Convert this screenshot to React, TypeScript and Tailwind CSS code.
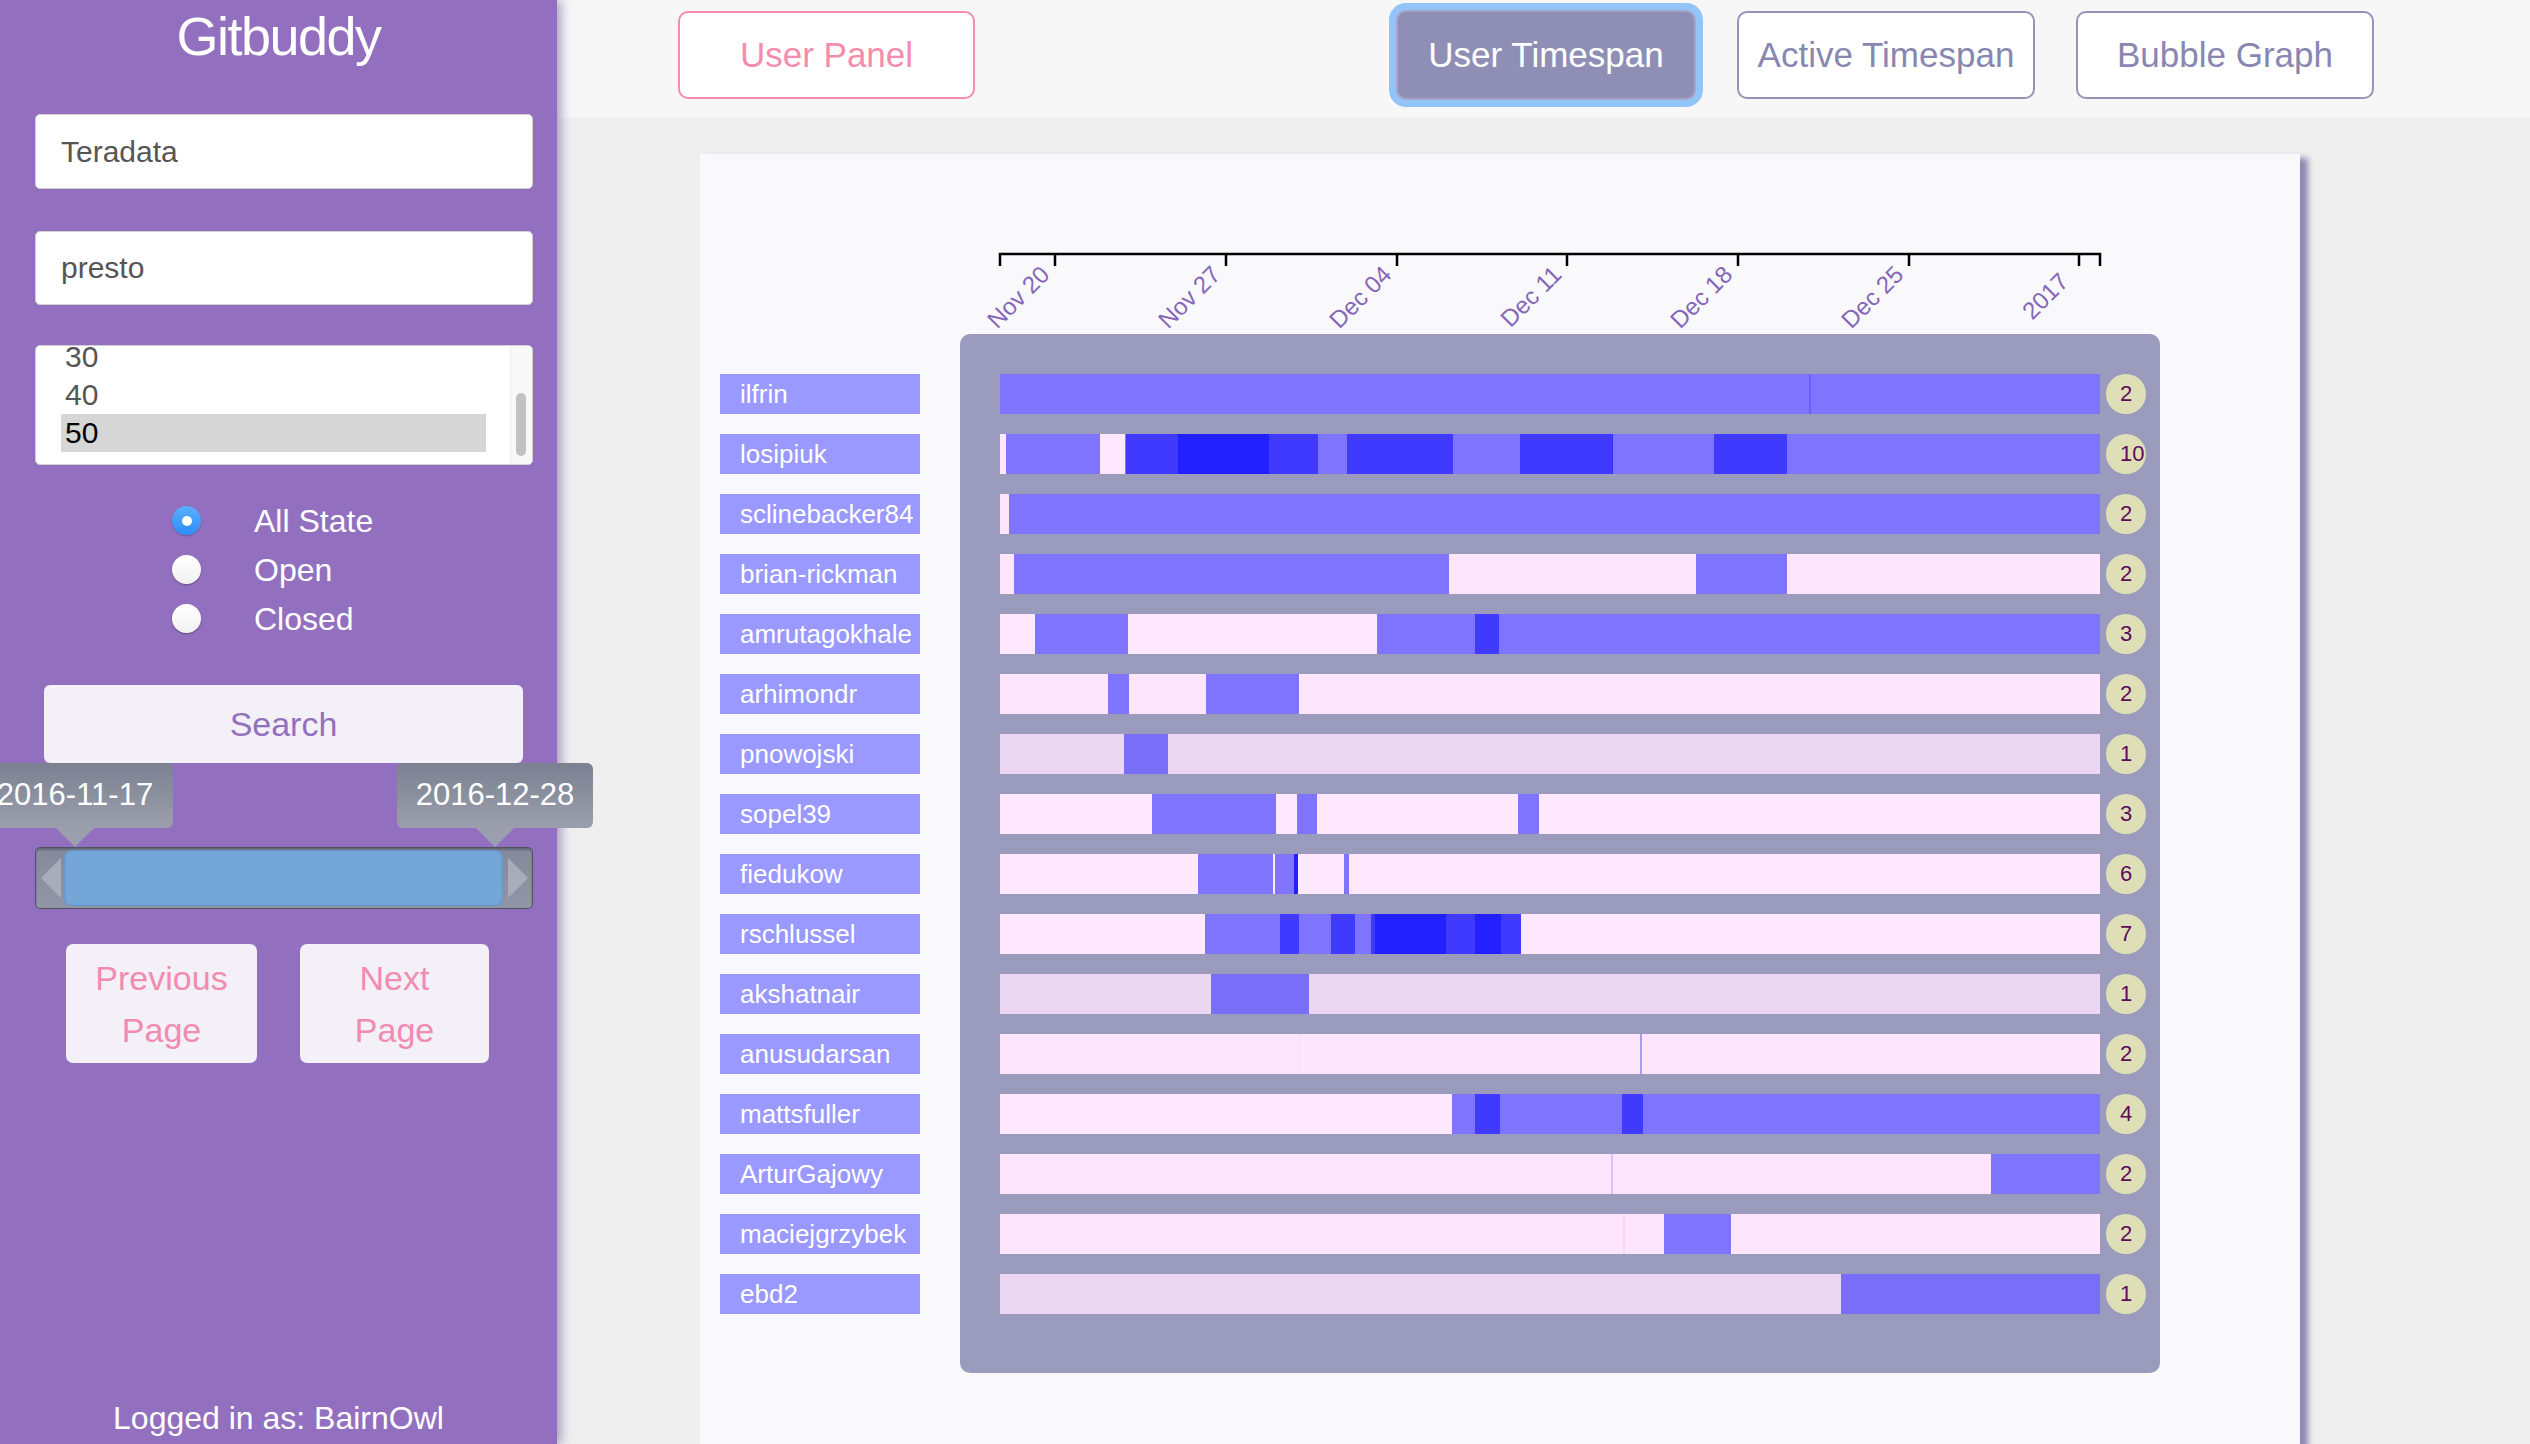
import React from "react";

type Seg = [number, number, string];

type Row = {
  name: string;
  count: number;
  base: string;
  segs: Seg[];
};

// bar colours
const L = "#7f74fe";
const M = "#4039ff";
const D = "#2220ff";
const PINK = "#fde6fb";
const LAV = "#ebd7f2";
const L2 = "#786ef7";

// segment offsets are px inside the 1100px bar
const rows: Row[] = [
  { name: "ilfrin", count: 2, base: L, segs: [[809, 810.5, "#6a5eff"]] },
  {
    name: "losipiuk",
    count: 10,
    base: L,
    segs: [
      [0, 6.4, "#ffe8fe"],
      [99.8, 124.6, "#ffe8fe"],
      [126, 177.7, M],
      [177.7, 269, D],
      [269, 318, M],
      [347, 453, M],
      [520.3, 612.3, M],
      [611.5, 612.5, "#3030ff"],
      [714.3, 787.2, M],
    ],
  },
  { name: "sclinebacker84", count: 2, base: L, segs: [[0, 9.2, PINK]] },
  {
    name: "brian-rickman",
    count: 2,
    base: PINK,
    segs: [
      [14.2, 449.5, L],
      [695.9, 787.2, L],
    ],
  },
  {
    name: "amrutagokhale",
    count: 3,
    base: "#fee8fd",
    segs: [
      [35.4, 128.1, L],
      [377.3, 1100, L],
      [475, 499.1, M],
    ],
  },
  {
    name: "arhimondr",
    count: 2,
    base: PINK,
    segs: [
      [108.3, 129.5, L],
      [206, 298.7, L],
    ],
  },
  { name: "pnowojski", count: 1, base: LAV, segs: [[123.9, 167.8, L2]] },
  {
    name: "sopel39",
    count: 3,
    base: "#fee8fd",
    segs: [
      [152.2, 276.1, L],
      [297.3, 317.1, L],
      [518.2, 539.4, L],
    ],
  },
  {
    name: "fiedukow",
    count: 6,
    base: "#fee8fd",
    segs: [
      [198.2, 273.3, L],
      [275.4, 293.8, L],
      [293.8, 298, D],
      [344, 349, L],
    ],
  },
  {
    name: "rschlussel",
    count: 7,
    base: "#fee8fd",
    segs: [
      [205.3, 279.6, L],
      [279.6, 299.4, M],
      [299.4, 330.6, L],
      [330.6, 354.7, M],
      [354.7, 371, L],
      [371, 375.2, M],
      [375.2, 446, D],
      [446, 475, M],
      [475, 500.5, D],
      [500.5, 521, M],
    ],
  },
  { name: "akshatnair", count: 1, base: LAV, segs: [[211, 309.4, L2]] },
  {
    name: "anusudarsan",
    count: 2,
    base: PINK,
    segs: [
      [299, 300, "#f6def8"],
      [639.5, 641.5, "#a89cff"],
    ],
  },
  {
    name: "mattsfuller",
    count: 4,
    base: "#fee8fd",
    segs: [
      [451.6, 1100, L],
      [475, 499.8, M],
      [621.5, 642.8, M],
    ],
  },
  {
    name: "ArturGajowy",
    count: 2,
    base: PINK,
    segs: [
      [611, 612.5, "#dcc0f8"],
      [991.1, 1100, L],
    ],
  },
  {
    name: "maciejgrzybek",
    count: 2,
    base: PINK,
    segs: [
      [623, 624.5, "#f3d6f8"],
      [664, 731.3, L],
    ],
  },
  { name: "ebd2", count: 1, base: LAV, segs: [[841, 1100, L2]] },
];

const ticks = [
  { x: 355, label: "Nov 20", dx: -4, dy: 22 },
  { x: 526, label: "Nov 27", dx: -4, dy: 22 },
  { x: 697, label: "Dec 04", dx: -4, dy: 22 },
  { x: 867, label: "Dec 11", dx: -4, dy: 22 },
  { x: 1038, label: "Dec 18", dx: -4, dy: 22 },
  { x: 1209, label: "Dec 25", dx: -4, dy: 22 },
  { x: 1379, label: "2017", dx: -9, dy: 29 },
];

function Radio({ checked, label }: { checked?: boolean; label: string }) {
  return (
    <div className="flex h-[49px] items-center pl-[172px]">
      {checked ? (
        <div className="flex h-[29px] w-[29px] items-center justify-center rounded-full bg-gradient-to-b from-[#5aaefd] to-[#2f8df8] shadow-[0_1px_2px_rgba(0,0,0,0.25)]">
          <div className="h-[10px] w-[10px] rounded-full bg-white" />
        </div>
      ) : (
        <div className="h-[29px] w-[29px] rounded-full bg-gradient-to-b from-white to-[#f1f1f1] shadow-[0_1px_2px_rgba(0,0,0,0.35)]" />
      )}
      <span className="ml-[53px] text-[32px] leading-none text-white">{label}</span>
    </div>
  );
}

function Tooltip({ text, left }: { text: string; left: string }) {
  return (
    <div className={`absolute top-[-85px] ${left} flex w-[196px] flex-col items-center`}>
      <div className="flex h-[65px] w-full items-center justify-center rounded-[6px] bg-gradient-to-b from-[#7b8191] to-[#9b9fad] text-[31px] text-white">
        {text}
      </div>
      <svg width="38" height="19" viewBox="0 0 38 19" className="block">
        <polygon points="0,0 38,0 19,19" fill="#9b9fad" />
      </svg>
    </div>
  );
}

function TopButton({ label, kind }: { label: string; kind: "pink" | "active" | "plain" }) {
  if (kind === "active") {
    return (
      <button className="h-[90px] w-[300px] rounded-[10px] border-2 border-[#a5a5cc] bg-[#8f8fb6] text-[35px] text-white shadow-[0_0_0_7px_#93c4f8]">
        {label}
      </button>
    );
  }
  if (kind === "pink") {
    return (
      <button className="h-[88px] w-[297px] rounded-[10px] border-2 border-[#f58cab] bg-white text-[35px] text-[#f68cad]">
        {label}
      </button>
    );
  }
  return (
    <button className="h-[88px] w-[298px] rounded-[10px] border-2 border-[#9494b9] bg-white text-[35px] text-[#8787b1]">
      {label}
    </button>
  );
}

export default function App() {
  return (
    <div className="flex h-[1444px] w-[2530px] overflow-hidden font-['Liberation_Sans',Arial,sans-serif]">
      {/* Sidebar */}
      <aside className="relative z-10 flex h-full w-[557px] shrink-0 flex-col bg-[#9370bf] shadow-[4px_0_10px_rgba(110,80,160,0.55)]">
        <h1 className="pt-[9px] text-center text-[54px] leading-[54px] tracking-[-1.5px] text-white">Gitbuddy</h1>

        <input
          readOnly
          defaultValue="Teradata"
          className="mx-[35px] mt-[51px] h-[75px] w-[498px] rounded-[5px] border border-[#cfcfcf] bg-white px-[25px] text-[30px] text-[#555555] outline-none"
        />
        <input
          readOnly
          defaultValue="presto"
          className="mx-[35px] mt-[42px] h-[74px] w-[498px] rounded-[5px] border border-[#cfcfcf] bg-white px-[25px] text-[30px] text-[#555555] outline-none"
        />

        {/* per-page list, scrolled to the bottom */}
        <div className="relative mx-[35px] mt-[40px] flex h-[120px] w-[498px] overflow-hidden rounded-[5px] border border-[#cfcfcf] bg-white">
          <div className="flex-1 overflow-hidden pl-[25px] pr-[24px]">
            <div className="mt-[-8px] flex flex-col">
              {["30", "40", "50"].map((n) => (
                <div
                  key={n}
                  className={`h-[38px] pl-[4px] text-[30px] leading-[38px] ${n === "50" ? "bg-[#d6d6d6] text-black" : "text-[#555555]"}`}
                >
                  {n}
                </div>
              ))}
            </div>
          </div>
          <div className="w-[22px] border-l border-[#ececec] bg-[#f8f8f8] pt-[47px]">
            <div className="ml-[5px] h-[63px] w-[10px] rounded-full bg-[#c2c2c2]" />
          </div>
        </div>

        {/* state */}
        <div className="mt-[31px] flex flex-col">
          <Radio checked label="All State" />
          <Radio label="Open" />
          <Radio label="Closed" />
        </div>

        <button className="mx-[44px] mt-[42px] h-[78px] w-[479px] rounded-[6px] bg-[#f3f0f8] text-[34px] text-[#9370bf]">
          Search
        </button>

        {/* date range slider */}
        <div className="relative mx-[35px] mt-[84px] h-[62px] w-[498px] rounded-[5px] border border-[#4f5360] bg-gradient-to-b from-[#858a9b] to-[#9195a5] shadow-[inset_0_2px_2px_rgba(0,0,0,0.25)]">
          <div className="absolute top-[2px] bottom-[2px] left-[28px] right-[29px] rounded-[7px] bg-[#75a6d8] shadow-[inset_0_0_3px_rgba(40,80,140,0.4)]" />
          <svg width="20" height="40" viewBox="0 0 20 40" className="absolute top-[10px] left-[5px]">
            <polygon points="20,0 20,40 0,20" fill="#a9adbb" />
          </svg>
          <svg width="20" height="40" viewBox="0 0 20 40" className="absolute top-[10px] right-[4px]">
            <polygon points="0,0 0,40 20,20" fill="#a9adbb" />
          </svg>
          <Tooltip text="2016-11-17" left="left-[-59px]" />
          <Tooltip text="2016-12-28" left="left-[361px]" />
        </div>

        <div className="mt-[35px] flex">
          <button className="ml-[66px] h-[119px] w-[191px] rounded-[7px] bg-[#f3f0f8] text-[34px] leading-[52px] text-[#f28bb0]">
            Previous
            <br />
            Page
          </button>
          <button className="ml-[43px] h-[119px] w-[189px] rounded-[7px] bg-[#f3f0f8] text-[34px] leading-[52px] text-[#f28bb0]">
            Next
            <br />
            Page
          </button>
        </div>

        <p className="mt-auto pb-[7px] text-center text-[32px] leading-[37px] text-white">Logged in as: BairnOwl</p>
      </aside>

      {/* Main */}
      <main className="flex min-w-0 flex-1 flex-col bg-[#efefef]">
        <header className="flex h-[118px] shrink-0 items-start bg-[#f7f7f7] pt-[11px] pl-[121px]">
          <TopButton label="User Panel" kind="pink" />
          <div className="ml-[421px] mt-[-1px]">
            <TopButton label="User Timespan" kind="active" />
          </div>
          <div className="ml-[41px]">
            <TopButton label="Active Timespan" kind="plain" />
          </div>
          <div className="ml-[41px]">
            <TopButton label="Bubble Graph" kind="plain" />
          </div>
        </header>

        <div className="pl-[143px] pt-[36px]">
          <div className="h-[1320px] w-[1600px] bg-[#f9f9fb] shadow-[8px_4px_6px_#8a8ab2]">
            {/* time axis */}
            <svg width="1600" height="180" className="block overflow-visible">
              <path d="M300,112 V100 H1400 V112" fill="none" stroke="#000" strokeWidth="2.5" />
              {ticks.map((t) => (
                <g key={t.label}>
                  <line x1={t.x} y1={100} x2={t.x} y2={112} stroke="#000" strokeWidth="2.5" />
                  <text
                    x={t.x + t.dx}
                    y={100 + t.dy}
                    textAnchor="end"
                    fontSize="24"
                    fill="#8566b8"
                    fontFamily="Liberation Sans, Arial, sans-serif"
                    transform={`rotate(-45 ${t.x + t.dx} ${100 + t.dy})`}
                  >
                    {t.label}
                  </text>
                </g>
              ))}
            </svg>

            <div className="flex">
              {/* user names */}
              <div className="ml-[20px] flex w-[200px] flex-col gap-[20px] pt-[40px]">
                {rows.map((r) => (
                  <div key={r.name} className="h-[40px] bg-[#9999ff] pl-[20px] text-[26px] leading-[40px] text-white">
                    {r.name}
                  </div>
                ))}
              </div>

              {/* timespan bars */}
              <div className="ml-[40px] flex w-[1200px] flex-col gap-[20px] rounded-[10px] bg-[#9a9bbd] pt-[40px] pr-[14px] pb-[59px] pl-[40px]">
                {rows.map((r) => (
                  <div key={r.name} className="flex h-[40px] items-center">
                    <div className="relative h-[40px] w-[1100px]" style={{ background: r.base }}>
                      {r.segs.map(([a, b, c], i) => (
                        <div
                          key={i}
                          className="absolute top-0 h-full"
                          style={{ left: a, width: b - a, background: c }}
                        />
                      ))}
                    </div>
                    <div className="ml-[6px] h-[40px] w-[40px] rounded-full bg-[#dfdfb7] pl-[14px] text-[22px] leading-[40px] text-[#5b0a5f]">
                      {r.count}
                    </div>
                  </div>
                ))}
              </div>
            </div>
          </div>
        </div>
      </main>
    </div>
  );
}
